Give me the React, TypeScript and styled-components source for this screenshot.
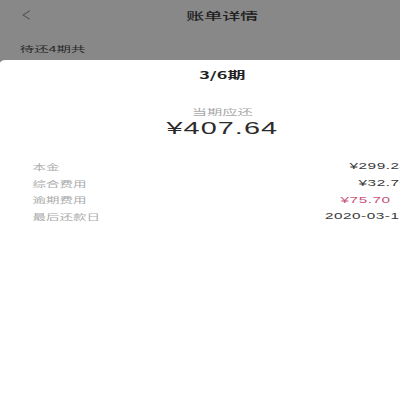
import { FC } from 'react';
import styled, { createGlobalStyle } from 'styled-components';

const GlobalStyle = createGlobalStyle`
	html, body {
		margin: 0;
		padding: 0;
		background: #ffffff;
		overflow: hidden;
	}
	body {
		font-family: 'Noto Sans CJK SC', 'Noto Sans', sans-serif;
	}
`;

// the source screenshot is squeezed vertically, so the page is drawn narrow and stretched
const Stretch = styled.div`
	width: 247px;
	height: 400px;
	transform: scaleX(1.8);
	transform-origin: 0 0;
	display: flex;
	flex-direction: column;
	background: #888888;
`;

const NavBar = styled.div`
	height: 30px;
	display: grid;
	grid-template-columns: 30px 1fr 30px;
	align-items: center;
	color: #262626;
`;

const Back = styled.div`
	padding-left: 12px;
	display: flex;
	align-items: center;
`;

const Title = styled.div`
	text-align: center;
	font-size: 10px;
	font-weight: 500;
	color: #1f1f1f;
`;

const Summary = styled.div`
	height: 30px;
	display: flex;
	align-items: center;
	padding: 12px 11px 6px;
	font-size: 8px;
	color: #2a2a2a;
	box-sizing: border-box;
`;

const Sheet = styled.div`
	flex: 1;
	background: #ffffff;
	border-radius: 3px 3px 0 0;
	display: flex;
	flex-direction: column;
	align-items: center;
	padding-top: 9px;
`;

const Period = styled.div`
	font-size: 10px;
	font-weight: 700;
	color: #222;
	line-height: 12px;
`;

const DueLabel = styled.div`
	margin-top: 25px;
	font-size: 8.5px;
	color: #a8a8a8;
	line-height: 10px;
`;

const DueAmount = styled.div`
	font-family: 'Liberation Sans', Arial, sans-serif;
	font-size: 16px;
	letter-spacing: 0.6px;
	color: #2b2b2b;
	line-height: 18px;
	margin-top: 4px;
`;

const List = styled.div`
	align-self: stretch;
	margin-top: 20px;
	padding: 0 20px 0 18px;
	display: flex;
	flex-direction: column;
`;

const Row = styled.div`
	height: 16.7px;
	display: flex;
	align-items: center;
	justify-content: space-between;
`;

const Label = styled.span`
	font-size: 7.5px;
	color: #ababab;
`;

const Value = styled.span<{ $overdue?: boolean }>`
	font-family: 'Liberation Sans', Arial, sans-serif;
	font-size: 8.5px;
	letter-spacing: 0.3px;
	color: ${({ $overdue }) => ($overdue ? '#c9557a' : '#3a3a3a')};
	margin-right: ${({ $overdue }) => ($overdue ? '10px' : '0')};
`;

const rows = [
	{ label: '本金', value: '¥299.24' },
	{ label: '综合费用', value: '¥32.70' },
	{ label: '逾期费用', value: '¥75.70', overdue: true },
	{ label: '最后还款日', value: '2020-03-15' },
];

const App: FC = () => {
	return (
		<>
			<GlobalStyle />
			<Stretch>
				<NavBar>
					<Back>
						<svg width='5' height='10' viewBox='0 0 5 10'>
							<path d='M4.5 0.8 L0.8 5 L4.5 9.2' fill='none' stroke='#4a4a4a' strokeWidth='0.6' />
						</svg>
					</Back>
					<Title>账单详情</Title>
					<div />
				</NavBar>
				<Summary>待还4期共</Summary>
				<Sheet>
					<Period>3/6期</Period>
					<DueLabel>当期应还</DueLabel>
					<DueAmount>¥407.64</DueAmount>
					<List>
						{rows.map((r) => (
							<Row key={r.label}>
								<Label>{r.label}</Label>
								<Value $overdue={r.overdue}>{r.value}</Value>
							</Row>
						))}
					</List>
				</Sheet>
			</Stretch>
		</>
	);
};

export default App;
